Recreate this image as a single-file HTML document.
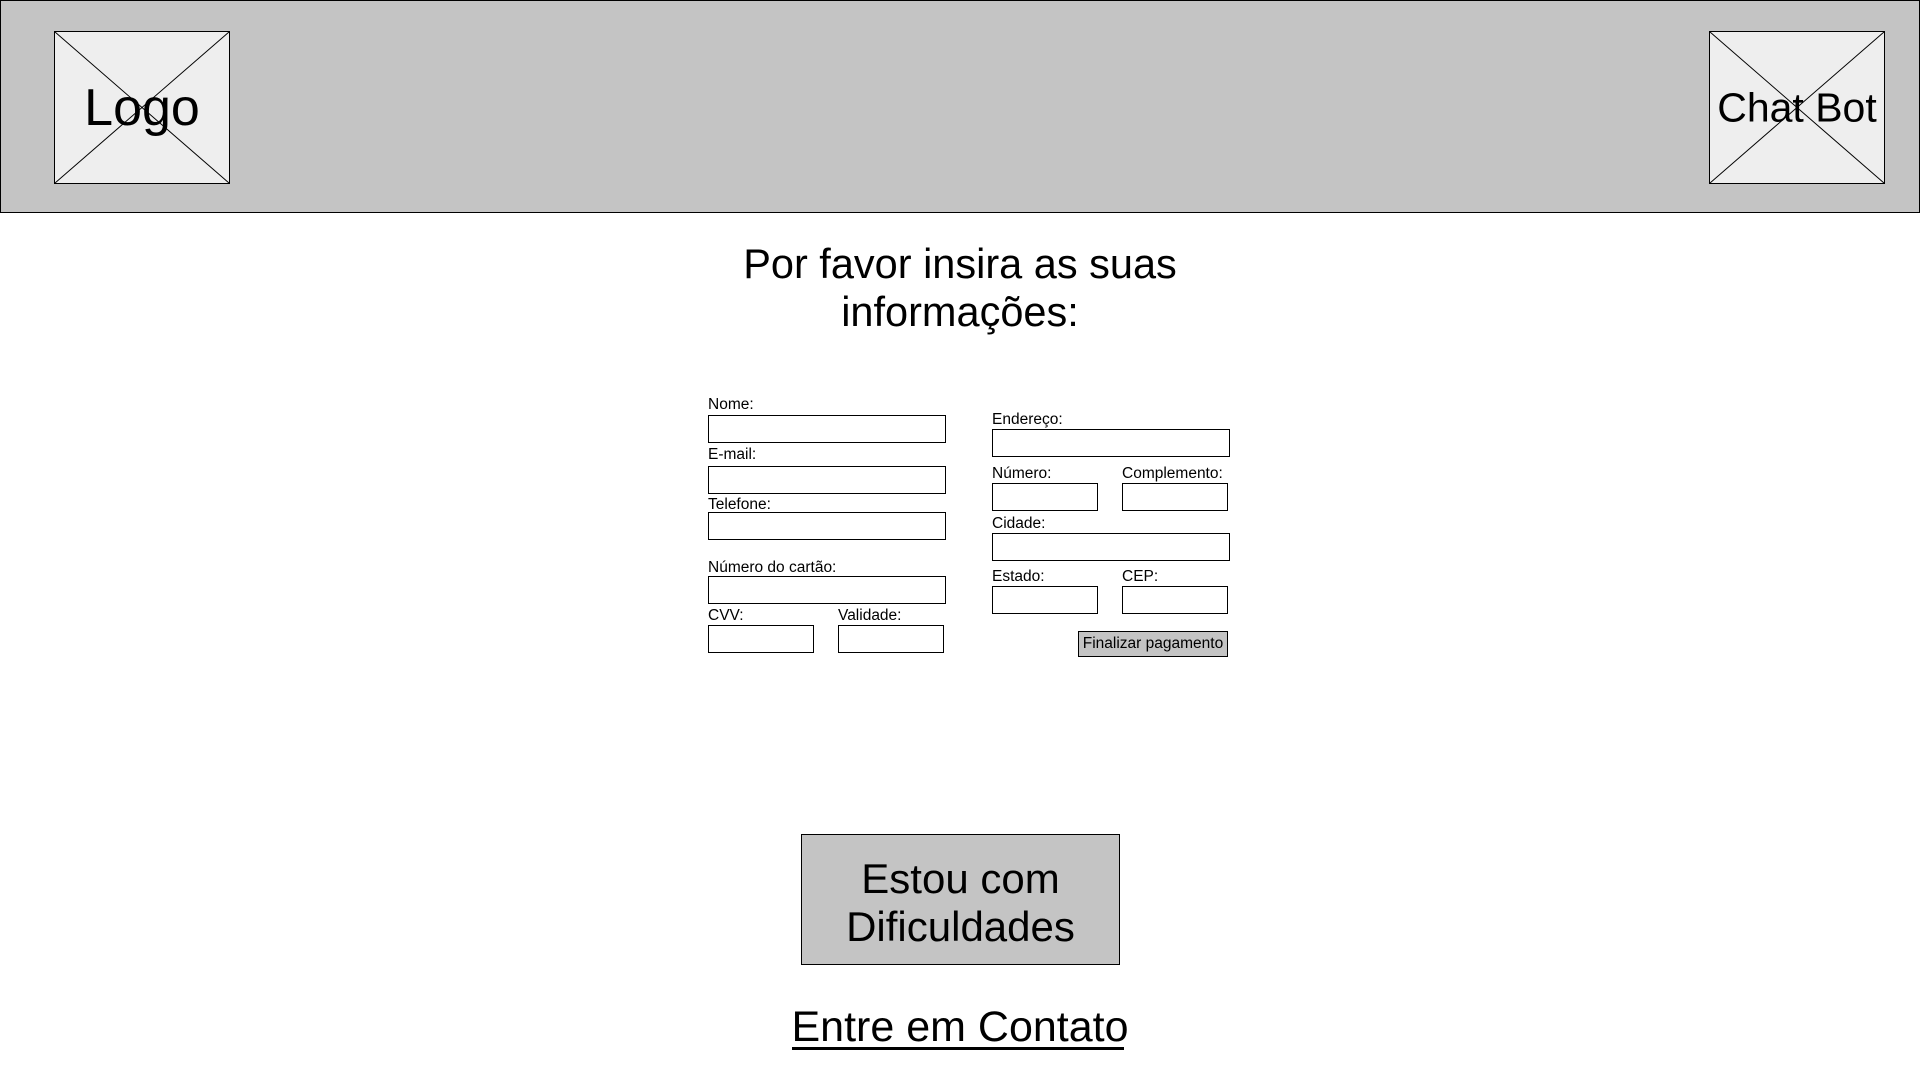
<!DOCTYPE html>
<html><head><meta charset="utf-8"><style>
body{margin:0;width:1920px;height:1080px;position:relative;background:#fff;font-family:"Liberation Sans",sans-serif;color:#000;overflow:hidden}
div,span{position:absolute;box-sizing:border-box}
.hdr{left:0;top:0;width:1920px;height:213px;background:#c4c4c4;border:1px solid #000}
.ph{background:#eee;border:1px solid #000}
.ph svg{position:absolute;left:0;top:0}
.ph span{left:0;right:0;text-align:center;font-size:46px;top:50%;transform:translateY(-50%);white-space:nowrap}
.lb{font-size:15.5px;line-height:18px;white-space:nowrap}
.in{border:1px solid #000;background:#fff;height:28px}
</style></head><body>
<div class="hdr"></div>
<div class="ph" style="left:54px;top:31px;width:176px;height:153px"><svg width="174" height="151"><line x1="0" y1="0" x2="174" y2="151" stroke="#000" stroke-width="1"/><line x1="174" y1="0" x2="0" y2="151" stroke="#000" stroke-width="1"/></svg><span style="font-size:52px">Logo</span></div>
<div class="ph" style="left:1709px;top:31px;width:176px;height:153px"><svg width="174" height="151"><line x1="0" y1="0" x2="174" y2="151" stroke="#000" stroke-width="1"/><line x1="174" y1="0" x2="0" y2="151" stroke="#000" stroke-width="1"/></svg><span style="font-size:41px">Chat Bot</span></div>
<div style="left:660px;width:600px;top:240px;text-align:center;font-size:41.5px;line-height:48px">Por favor insira as suas<br>informações:</div>

<div class="lb" style="left:708px;top:396px">Nome:</div>
<div class="in" style="left:708px;top:415px;width:238px"></div>
<div class="lb" style="left:708px;top:446px">E-mail:</div>
<div class="in" style="left:708px;top:466px;width:238px"></div>
<div class="lb" style="left:708px;top:496px">Telefone:</div>
<div class="in" style="left:708px;top:512px;width:238px"></div>
<div class="lb" style="left:708px;top:559px">Número do cartão:</div>
<div class="in" style="left:708px;top:576px;width:238px"></div>
<div class="lb" style="left:708px;top:607px">CVV:</div>
<div class="in" style="left:708px;top:625px;width:106px"></div>
<div class="lb" style="left:838px;top:607px">Validade:</div>
<div class="in" style="left:838px;top:625px;width:106px"></div>

<div class="lb" style="left:992px;top:411px">Endereço:</div>
<div class="in" style="left:992px;top:429px;width:238px"></div>
<div class="lb" style="left:992px;top:465px">Número:</div>
<div class="in" style="left:992px;top:483px;width:106px"></div>
<div class="lb" style="left:1122px;top:465px">Complemento:</div>
<div class="in" style="left:1122px;top:483px;width:106px"></div>
<div class="lb" style="left:992px;top:515px">Cidade:</div>
<div class="in" style="left:992px;top:533px;width:238px"></div>
<div class="lb" style="left:992px;top:568px">Estado:</div>
<div class="in" style="left:992px;top:586px;width:106px"></div>
<div class="lb" style="left:1122px;top:568px">CEP:</div>
<div class="in" style="left:1122px;top:586px;width:106px"></div>
<div style="left:1078px;top:631px;width:150px;height:26px;background:#c4c4c4;border:1px solid #000;font-size:15.5px;line-height:24px;text-align:center;white-space:nowrap">Finalizar pagamento</div>

<div style="left:801px;top:834px;width:319px;height:131px;background:#c4c4c4;border:1px solid #000;font-size:42px;line-height:48px;text-align:center;padding-top:20px">Estou com<br>Dificuldades</div>
<div style="left:760px;width:400px;top:1003px;text-align:center;font-size:43px;line-height:48px">Entre em Contato</div>
<div style="left:792px;top:1047px;width:332px;height:3px;background:#000"></div>
</body></html>
